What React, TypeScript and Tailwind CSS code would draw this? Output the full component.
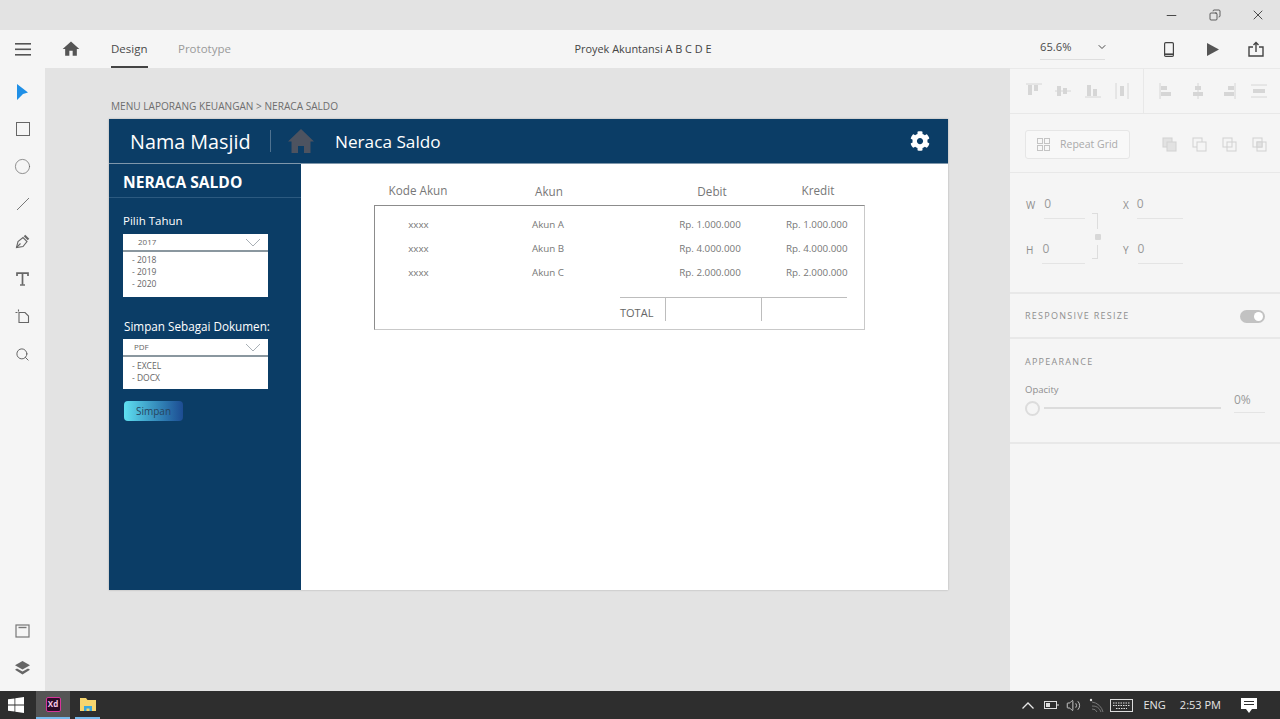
import { Minus, X, Copy, ChevronDown, Circle, Search, Volume2 } from 'lucide-react'
import { FaCog } from 'react-icons/fa'
import { MdHome } from 'react-icons/md'

const rows = [
  { kode: 'xxxx', akun: 'Akun A', debit: 'Rp. 1.000.000', kredit: 'Rp. 1.000.000' },
  { kode: 'xxxx', akun: 'Akun B', debit: 'Rp. 4.000.000', kredit: 'Rp. 4.000.000' },
  { kode: 'xxxx', akun: 'Akun C', debit: 'Rp. 2.000.000', kredit: 'Rp. 2.000.000' },
]

const Caret = () => (
  <svg width="16" height="9" viewBox="0 0 16 9" fill="none" stroke="#a9b0b6" strokeWidth="1">
    <path d="M1 1l7 7 7-7" />
  </svg>
)

// align row icons in the right panel, all share the same 18px box
const Glyph = ({ d, rects }: { d: string; rects: number[][] }) => (
  <svg width="18" height="18" viewBox="0 0 18 18" fill="#d6d6d6" stroke="none">
    <path d={d} stroke="#d6d6d6" strokeWidth="1" fill="none" />
    {rects.map((r, i) => <rect key={i} x={r[0]} y={r[1]} width={r[2]} height={r[3]} />)}
  </svg>
)

const Combine = ({ mode }: { mode: number }) => (
  <svg width="15" height="15" viewBox="0 0 15 15" fill="none" stroke="#d4d4d4" strokeWidth="1.1">
    <rect x="1" y="1" width="9" height="9" fill={mode === 0 ? '#e2e2e2' : 'none'} />
    <rect x="5" y="5" width="9" height="9" fill={mode === 0 ? '#e2e2e2' : mode === 1 ? '#f5f5f5' : 'none'} />
    {mode === 3 && <rect x="5" y="5" width="5" height="5" fill="#e2e2e2" />}
  </svg>
)

function DimField({ label, w, gap }: { label: string; w: string; gap: string }) {
  return (
    <div className="flex items-start">
      <span className={`text-[10px] text-[#8d8d8d] mt-[3px] ${gap}`}>{label}</span>
      <div className={`${w} h-[24px] border-b border-[#e4e4e4] text-[12px] text-[#9a9a9a]`}>0</div>
    </div>
  )
}

export default function App() {
  return (
    <div className="w-[1280px] h-[719px] flex flex-col overflow-hidden bg-[#e3e3e3] text-[#555] font-['Open_Sans','Noto_Sans',sans-serif]">
      {/* window title bar */}
      <div className="h-[30px] shrink-0 flex items-center justify-end bg-[#e3e3e3] text-[#333]">
        <div className="w-[43px] flex justify-center"><Minus size={15} strokeWidth={1.4} /></div>
        <div className="w-[43px] flex justify-center"><Copy size={12} strokeWidth={1.5} className="-scale-x-100" /></div>
        <div className="w-[43px] flex justify-center mr-[1px]"><X size={16} strokeWidth={1.3} /></div>
      </div>

      {/* toolbar */}
      <div className="h-[38px] shrink-0 flex items-stretch bg-[#f5f5f5]">
        <div className="w-[400px] flex items-center">
          <div className="w-[46px] flex justify-center">
            <svg width="16" height="13" viewBox="0 0 16 13" fill="#555"><rect y="0" width="16" height="1.6" /><rect y="5.5" width="16" height="1.6" /><rect y="11" width="16" height="1.6" /></svg>
          </div>
          <div className="w-[50px] flex justify-center"><MdHome size={20} color="#555" /></div>
          <div className="ml-[15px] w-[37px] h-full flex items-center border-b-2 border-[#444] text-[11.5px] text-[#4a4a4a] pt-[1px]">Design</div>
          <div className="ml-[30px] text-[11.5px] text-[#9a9a9a]">Prototype</div>
        </div>
        <div className="w-[486px] flex items-center justify-center text-[10.9px] text-[#444]">Proyek Akuntansi A B C D E</div>
        <div className="flex-1 flex items-center">
          <div className="ml-[154px] w-[65px] h-[24px] flex items-center justify-between border-b border-[#dedede] text-[11.2px] text-[#4a4a4a] mt-[-3px]">
            65.6%
            <ChevronDown size={12} className="mr-[-3px]" />
          </div>
          <svg className="ml-[59px]" width="10" height="15" viewBox="0 0 10 15" fill="none" stroke="#444" strokeWidth="1.2">
            <rect x="0.6" y="0.6" width="8.8" height="13.8" rx="1.2" /><path d="M1 12.2h8" strokeWidth="1.6" />
          </svg>
          <svg className="ml-[33px]" width="12" height="13" viewBox="0 0 12 13" fill="#555"><path d="M0 0l12 6.5L0 13z" /></svg>
          <svg className="ml-[29px]" width="16" height="16" viewBox="0 0 16 16" fill="none" stroke="#444" strokeWidth="1.4">
            <path d="M5 6H1v9h14V6h-4" /><path d="M8 11V1.5M5.5 4L8 1.5 10.5 4" />
          </svg>
        </div>
      </div>

      <div className="flex-1 flex min-h-0">
        {/* tool rail */}
        <div className="w-[45px] shrink-0 flex flex-col items-center pt-[5px] pb-[4px] bg-[#f5f5f5] text-[#666]">
          <div className="h-[37.5px] flex items-center">
            <svg width="11" height="16" viewBox="0 0 11 16" fill="#1f8fe6"><path d="M0 0l11 8.5-5 1.5L0 16z" /></svg>
          </div>
          <div className="h-[37.5px] flex items-center">
            <svg width="14" height="14" viewBox="0 0 14 14" fill="none" stroke="#666"><rect x="0.5" y="0.5" width="13" height="13" /></svg>
          </div>
          <div className="h-[37.5px] flex items-center"><Circle size={17} strokeWidth={1} /></div>
          <div className="h-[37.5px] flex items-center">
            <svg width="14" height="14" viewBox="0 0 14 14" stroke="#777" strokeWidth="1"><path d="M1 13L13 1" /></svg>
          </div>
          <div className="h-[37.5px] flex items-center">
            <svg width="15" height="15" viewBox="0 0 15 15" fill="none" stroke="#666" strokeWidth="1.1"><path d="M1.5 13.5l1.5-6 5-4 4 4-4 5z" /><path d="M9.5 1.5l4 4" strokeWidth="2.2" /><path d="M1.5 13.5l4-4" /></svg>
          </div>
          <div className="h-[37.5px] flex items-center">
            <svg width="13" height="14" viewBox="0 0 13 14" fill="none" stroke="#666"><path d="M1 4V1.2h11V4M6.5 1.2v11.6" strokeWidth="1.7" /><path d="M4 13h5" strokeWidth="1.4" /></svg>
          </div>
          <div className="h-[37.5px] flex items-center">
            <svg width="15" height="15" viewBox="0 0 15 15" fill="none" stroke="#666" strokeWidth="1.1"><path d="M4 3.5h6l3.5 3.5v6.5H4z" /><path d="M0.5 3.5h2M3.5 0.5v2" /></svg>
          </div>
          <div className="h-[37.5px] flex items-center"><Search size={15} strokeWidth={1.6} /></div>
          <div className="mt-auto h-[37.5px] flex items-center">
            <svg width="15" height="14" viewBox="0 0 15 14" fill="none" stroke="#777" strokeWidth="1.2"><rect x="1" y="1" width="13" height="12" /><path d="M3.5 3.5h8" strokeWidth="1.4" /></svg>
          </div>
          <div className="h-[37.5px] flex items-center">
            <svg width="15" height="14" viewBox="0 0 15 14" fill="#666"><path d="M7.5 0L15 4.2 7.5 8.4 0 4.2z" /><path d="M2 7.4l5.5 3 5.5-3L15 8.8l-7.5 4.6L0 8.8z" /></svg>
          </div>
        </div>

        {/* canvas */}
        <div className="flex-1 pl-[64px] pt-[32px] bg-[#e3e3e3]">
          <div className="h-[19px] pl-[2px] text-[10.1px] leading-[13px] text-[#6e6e6e]">MENU LAPORANG KEUANGAN &gt; NERACA SALDO</div>
          <div className="w-[839px] h-[471px] flex flex-col bg-white shadow-[0_0_2px_rgba(0,0,0,0.25)]">
            <div className="h-[45px] shrink-0 flex items-center bg-[#0b3d66] border-b border-[#7f97ab] text-white">
              <div className="ml-[21px] w-[140px] pt-[1px] text-[19.8px] leading-none">Nama Masjid</div>
              <div className="h-[22px] border-l border-[#4f7290]"></div>
              <svg className="ml-[17px]" width="26" height="24" viewBox="0 0 26 24" fill="#4d5360"><path d="M13 0L26 12.5h-3.5V24H16v-7h-6v7H3.5V12.5H0z" /></svg>
              <div className="ml-[21px] pt-[1px] text-[17.2px] leading-none">Neraca Saldo</div>
              <FaCog size={20} color="#fff" className="ml-auto mr-[18px]" />
            </div>
            <div className="flex-1 flex min-h-0">
              {/* sidebar */}
              <div className="w-[192px] shrink-0 bg-[#0b3d66] text-white">
                <div className="h-[34px] flex items-center pl-[14px] pt-[4px] border-b border-[#2c5a80] text-[15.6px] font-bold">NERACA SALDO</div>
                <div className="pl-[14px] pt-[14px] w-[159px]">
                  <div className="text-[11.5px] leading-[17px]">Pilih Tahun</div>
                  <div className="mt-[5px] h-[18px] flex items-center justify-between bg-white border-b-2 border-[#8a979f] pl-[15px] pr-[7px] text-[8px] text-[#666]">2017<Caret /></div>
                  <div className="h-[45px] pt-[2px] pl-[9px] bg-white text-[8.5px] leading-[12px] text-[#666]">
                    <div>- 2018</div><div>- 2019</div><div>- 2020</div>
                  </div>
                </div>
                <div className="pl-[14px] pt-[21px] w-[180px]">
                  <div className="pl-[1px] text-[11.7px] leading-[17px] whitespace-nowrap">Simpan Sebagai Dokumen:</div>
                  <div className="mt-[4px] w-[145px] h-[18px] flex items-center justify-between bg-white border-b-2 border-[#8a979f] pl-[11px] pr-[7px] text-[8px] text-[#666]">PDF<Caret /></div>
                  <div className="w-[145px] h-[32px] pt-[3px] pl-[9px] bg-white text-[8.5px] leading-[12px] text-[#666]">
                    <div>- EXCEL</div><div>- DOCX</div>
                  </div>
                  <div className="mt-[12px] ml-[1px] w-[59px] h-[20px] flex items-center justify-center rounded-[4px] bg-gradient-to-r from-[#5fe0f0] to-[#1d4c92] text-[10px] text-[#27455f]">Simpan</div>
                </div>
              </div>

              {/* report table */}
              <div className="flex-1 pl-[73px] pt-[18px]">
                <div className="w-[491px] grid grid-cols-[88px_174px_152px_60px] text-[11.7px] leading-[16px] text-[#777] text-center">
                  <div>Kode Akun</div>
                  <div className="pt-[1px]">Akun</div>
                  <div className="pt-[1px]">Debit</div>
                  <div>Kredit</div>
                </div>
                <div className="mt-[6px] w-[491px] h-[125px] border border-[#8c8c8c] border-r-[#c9c9c9] border-b-[#c9c9c9] pt-[7px] text-[9.8px] text-[#777]">
                  {rows.map(r => (
                    <div key={r.akun} className="h-[24px] grid grid-cols-[87px_172px_152px_61px] items-center text-center whitespace-nowrap">
                      <div>{r.kode}</div>
                      <div>{r.akun}</div>
                      <div>{r.debit}</div>
                      <div>{r.kredit}</div>
                    </div>
                  ))}
                  <div className="ml-[245px] mt-[12px] w-[227px] h-[22px] grid grid-cols-[46px_96px_85px] border-t border-[#bdbdbd] text-[11px] text-[#666]">
                    <div className="border-r border-[#bdbdbd] pt-[7px] leading-[16px]">TOTAL</div>
                    <div className="border-r border-[#bdbdbd]"></div>
                    <div></div>
                  </div>
                </div>
              </div>
            </div>
          </div>
        </div>

        {/* property panel */}
        <div className="w-[270px] shrink-0 bg-[#f5f5f5]">
          <div className="h-[46px] flex border-y border-[#e8e8e8] border-t-[#e9e9e9]">
            <div className="w-[134px] flex items-center justify-between pl-[15px] pr-[12px] border-r border-[#e8e8e8]">
              <Glyph d="M1 2h16" rects={[[3, 3, 4, 10], [9, 3, 4, 6]]} />
              <Glyph d="M1 9h16" rects={[[3, 4, 4, 10], [9, 6, 4, 6]]} />
              <Glyph d="M1 15h16" rects={[[3, 3, 4, 11], [9, 7, 4, 7]]} />
              <Glyph d="M3 1v16M15 1v16" rects={[[7, 4, 4, 10]]} />
            </div>
            <div className="flex-1 flex items-center justify-between pl-[14px] pr-[12px]">
              <Glyph d="M2 1v16" rects={[[3, 4, 6, 4], [3, 10, 10, 4]]} />
              <Glyph d="M9 1v16" rects={[[6, 4, 6, 4], [4, 10, 10, 4]]} />
              <Glyph d="M16 1v16" rects={[[9, 4, 6, 4], [5, 10, 10, 4]]} />
              <Glyph d="M1 3h16M1 15h16" rects={[[3, 7, 12, 4]]} />
            </div>
          </div>
          <div className="h-[59px] flex items-start border-b border-[#e8e8e8] pl-[15px] pt-[16px]">
            <div className="w-[105px] h-[29px] flex items-center gap-[10px] pl-[11px] bg-[#f8f8f8] border border-[#e6e6e6] rounded-[3px] text-[10.5px] text-[#aaa]">
              <svg width="13" height="13" viewBox="0 0 13 13" fill="none" stroke="#c4c4c4"><rect x="0.5" y="0.5" width="5" height="5" /><rect x="7.5" y="0.5" width="5" height="5" /><rect x="0.5" y="7.5" width="5" height="5" /><rect x="7.5" y="7.5" width="5" height="5" /></svg>
              Repeat Grid
            </div>
            <div className="flex gap-[15px] ml-[32px] mt-[7px]">
              <Combine mode={0} /><Combine mode={1} /><Combine mode={2} /><Combine mode={3} />
            </div>
          </div>
          <div className="h-[121px] flex border-b-2 border-[#e8e8e8] pl-[16px] pt-[22px]">
            <div className="w-[64px] flex flex-col gap-[21px]">
              <DimField label="W" w="w-[41px]" gap="mr-[9px]" />
              <DimField label="H" w="w-[43px]" gap="mr-[9px]" />
            </div>
            <div className="w-[31px] ml-[2px] mt-[18px] h-[46px] flex flex-col justify-between items-start">
              <div className="w-[6px] h-[16px] border-t border-r border-[#ddd]"></div>
              <div className="ml-[3px] w-[6px] h-[6px] bg-[#d8d8d8] rounded-[1px]"></div>
              <div className="w-[6px] h-[14px] border-b border-r border-[#ddd]"></div>
            </div>
            <div className="flex flex-col gap-[21px]">
              <DimField label="X" w="w-[46px]" gap="mr-[8px]" />
              <DimField label="Y" w="w-[45px]" gap="mr-[9px]" />
            </div>
          </div>
          <div className="h-[45px] flex items-center justify-between pl-[15px] pr-[15px] pt-[1px] border-b-2 border-[#e8e8e8]">
            <span className="text-[9px] tracking-[0.14em] text-[#8f8f8f]">RESPONSIVE RESIZE</span>
            <div className="w-[25px] h-[13px] flex items-center justify-end pr-[2px] rounded-full bg-[#c2c2c2]">
              <div className="w-[9px] h-[9px] rounded-full bg-white"></div>
            </div>
          </div>
          <div className="h-[105px] border-b-2 border-[#e8e8e8] pl-[15px] pr-[15px] pt-[16px]">
            <div className="text-[9px] leading-[14px] tracking-[0.14em] text-[#8f8f8f]">APPEARANCE</div>
            <div className="mt-[14px] text-[9.5px] leading-[13px] text-[#8f8f8f]">Opacity</div>
            <div className="flex items-center">
              <div className="w-[15px] h-[15px] rounded-full border-2 border-[#dcdcdc] mt-[5px]"></div>
              <div className="ml-[4px] w-[177px] h-[2px] bg-[#dcdcdc] mt-[4px]"></div>
              <div className="ml-[13px] w-[31px] h-[22px] border-b border-[#e4e4e4] text-[12px] text-[#9a9a9a] mt-[-8px]">0%</div>
            </div>
          </div>
        </div>
      </div>

      {/* windows taskbar */}
      <div className="h-[28px] shrink-0 flex items-center bg-[#2e2e2e] text-[#e6e6e6]">
        <div className="w-[36px] pl-[8px]">
          <svg width="16" height="16" viewBox="0 0 16 16" fill="#fff"><path d="M0 2.3l6.5-.9v6.2H0zM7.3 1.3L16 0v7.6H7.3zM0 8.4h6.5v6.2L0 13.7zM7.3 8.4H16V16l-8.7-1.2z" /></svg>
        </div>
        <div className="w-[34px] h-full flex items-center justify-center bg-[#555] border-b-2 border-[#76b9ed]">
          <div className="w-[15px] h-[15px] flex items-center justify-center bg-[#2b0a26] border border-[#d6359a] rounded-[2px] text-[8px] font-bold text-[#f5c6e6] leading-none">Xd</div>
        </div>
        <div className="ml-[5px] w-[25px] h-full flex items-center justify-center border-b-2 border-[#76b9ed]">
          <svg width="16" height="14" viewBox="0 0 16 14"><path d="M0 1h6l1.5 2H16v11H0z" fill="#f6d56e" /><path d="M4 9h8v5h-2.5v-2.5h-3V14H4z" fill="#3aa7dc" /></svg>
        </div>
        <div className="ml-auto flex items-center text-[#e6e6e6]">
          <svg width="12" height="7" viewBox="0 0 12 7" fill="none" stroke="#e6e6e6" strokeWidth="1.3"><path d="M0.5 6.5L6 1l5.5 5.5" /></svg>
          <svg className="ml-[10px]" width="15" height="10" viewBox="0 0 15 10" fill="none" stroke="#ddd"><rect x="0.5" y="1.5" width="12" height="7" /><rect x="2" y="3" width="4" height="4" fill="#ddd" stroke="none" /><path d="M14 4v2" /></svg>
          <Volume2 size={15} strokeWidth={1.3} className="ml-[7px]" />
          <svg className="ml-[8px]" width="15" height="15" viewBox="0 0 15 15" fill="none" stroke="#777"><path d="M3 8a9 9 0 0 1 9 6M3 4a13 13 0 0 1 11 10M3 11a5 5 0 0 1 5 3" /><circle cx="2" cy="2" r="1.2" fill="#ddd" stroke="none" /></svg>
          <svg className="ml-[6px]" width="23" height="13" viewBox="0 0 23 13" fill="none" stroke="#ddd"><rect x="0.5" y="0.5" width="22" height="12" /><path d="M3 4h17M3 6.5h17M6 9.5h11" strokeDasharray="1.5 1" /></svg>
          <span className="ml-[10px] text-[11px]">ENG</span>
          <span className="ml-[14px] text-[11px]">2:53 PM</span>
          <svg className="ml-[20px] mr-[23px]" width="16" height="15" viewBox="0 0 16 15" fill="#fff"><path fillRule="evenodd" d="M0 0h16v11h-5l-3 4-3-4H0zM3 3v1h10V3zM3 6v1h10V6z" /></svg>
        </div>
      </div>
    </div>
  )
}
